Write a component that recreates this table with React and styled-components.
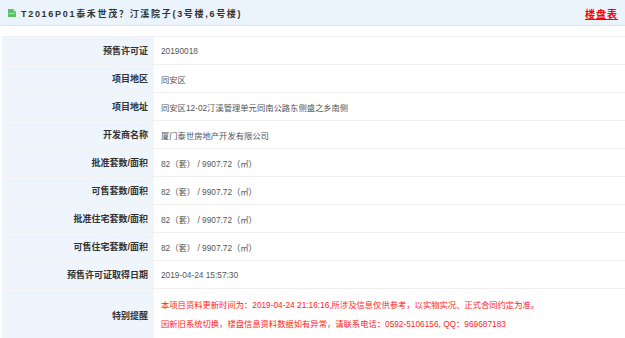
import React from "react";
import styled, { createGlobalStyle } from "styled-components";

const GlobalStyle = createGlobalStyle`
  body {
    margin: 0;
    background: #fff;
    font-family: "Liberation Sans", Arial, "Noto Sans CJK SC", sans-serif;
  }
`;

const Page = styled.div`
  width: 625px;
  height: 338px;
  overflow: hidden;
  background: #fff;
`;

const Header = styled.div`
  display: flex;
  align-items: center;
  justify-content: space-between;
  height: 26px;
  box-sizing: border-box;
  padding: 1px 7px 0 8px;
  background: #ebf4fc;
  border-bottom: 1px solid #d2e4f6;
`;

const Title = styled.div`
  display: flex;
  align-items: center;
  gap: 5px;
  font-size: 9px;
  font-weight: bold;
  color: #333;
  letter-spacing: 1.7px;
`;

const TableLink = styled.a`
  font-size: 10px;
  font-weight: bold;
  color: #f00;
  text-decoration: underline;
  letter-spacing: 1px;
`;

const Table = styled.div`
  margin-top: 10px;
  padding: 0 0 0 2px;
`;

const Row = styled.div`
  display: grid;
  grid-template-columns: 152px 1fr;
  box-sizing: border-box;
  border-top: 1px solid #f0f0f0;
  height: ${(p) => (p.tall ? "53px" : "28px")};
`;

const Label = styled.div`
  display: flex;
  align-items: center;
  justify-content: flex-end;
  padding-right: 6px;
  background: #eef5fd;
  font-size: 9px;
  font-weight: bold;
  color: #333;
`;

const Value = styled.div`
  display: flex;
  flex-direction: column;
  justify-content: center;
  padding-left: 7px;
  font-size: 8.3px;
  color: ${(p) => (p.red ? "#f22" : "#555")};
  line-height: ${(p) => (p.red ? "19px" : "normal")};
  white-space: nowrap;
`;

const DocIcon = () => (
  <svg width="8" height="8" viewBox="0 0 8 8">
    <path d="M0 0 H5.5 L8 2.5 V8 H0 Z" fill="#5cc26a" />
    <path d="M5.5 0 L8 2.5 H5.5 Z" fill="#b6e4bd" />
    <rect x="1" y="4" width="6" height="0.8" fill="#bfe8c5" />
  </svg>
);

const rows = [
  ["预售许可证", "20190018"],
  ["项目地区", "同安区"],
  ["项目地址", "同安区12-02汀溪管理单元同南公路东侧盛之乡南侧"],
  ["开发商名称", "厦门泰世房地产开发有限公司"],
  ["批准套数/面积", "82（套） / 9907.72（㎡）"],
  ["可售套数/面积", "82（套） / 9907.72（㎡）"],
  ["批准住宅套数/面积", "82（套） / 9907.72（㎡）"],
  ["可售住宅套数/面积", "82（套） / 9907.72（㎡）"],
  ["预售许可证取得日期", "2019-04-24 15:57:30"],
];

export default function App() {
  return (
    <Page>
      <GlobalStyle />
      <Header>
        <Title>
          <DocIcon />
          T2016P01泰禾世茂？汀溪院子(3号楼,6号楼)
        </Title>
        <TableLink>楼盘表</TableLink>
      </Header>
      <Table>
        {rows.map(([k, v]) => (
          <Row key={k}>
            <Label>{k}</Label>
            <Value>{v}</Value>
          </Row>
        ))}
        <Row tall>
          <Label>特别提醒</Label>
          <Value red>
            <span>本项目资料更新时间为：2019-04-24 21:16:16,所涉及信息仅供参考，以实物实况、正式合同约定为准。</span>
            <span>因新旧系统切换，楼盘信息资料数据如有异常，请联系电话：0592-5106156, QQ：969687183</span>
          </Value>
        </Row>
      </Table>
    </Page>
  );
}
